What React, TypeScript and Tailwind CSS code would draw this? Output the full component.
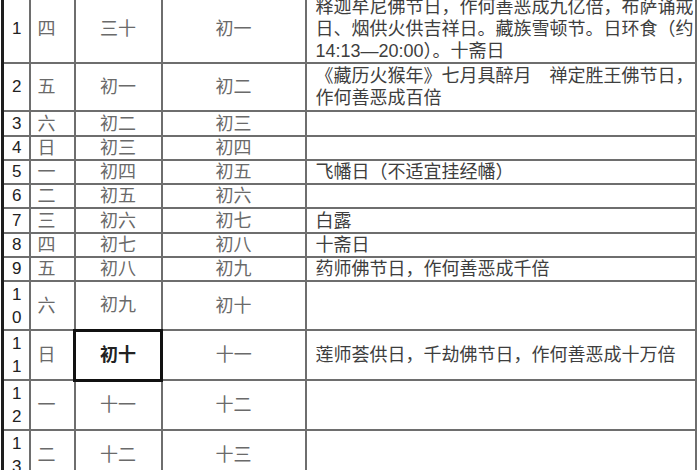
const rows: {
  n: string[];
  wd: string;
  a: string;
  b: string;
  note: string[];
  h: string;
  bold?: boolean;
}[] = [
  {
    n: ["1"],
    wd: "四",
    a: "三十",
    b: "初一",
    note: [
      "释迦牟尼佛节日，作何善恶成九亿倍，布萨诵戒",
      "日、烟供火供吉祥日。藏族雪顿节。日环食（约",
      "14:13—20:00）。十斋日",
    ],
    h: "h-[68px]",
  },
  {
    n: ["2"],
    wd: "五",
    a: "初一",
    b: "初二",
    note: ["《藏历火猴年》七月具醉月　禅定胜王佛节日，", "作何善恶成百倍"],
    h: "h-[48px]",
  },
  { n: ["3"], wd: "六", a: "初二", b: "初三", note: [], h: "h-[25px]" },
  { n: ["4"], wd: "日", a: "初三", b: "初四", note: [], h: "h-[24px]" },
  { n: ["5"], wd: "一", a: "初四", b: "初五", note: ["飞幡日（不适宜挂经幡）"], h: "h-[24px]" },
  { n: ["6"], wd: "二", a: "初五", b: "初六", note: [], h: "h-[24px]" },
  { n: ["7"], wd: "三", a: "初六", b: "初七", note: ["白露"], h: "h-[25px]" },
  { n: ["8"], wd: "四", a: "初七", b: "初八", note: ["十斋日"], h: "h-[24px]" },
  { n: ["9"], wd: "五", a: "初八", b: "初九", note: ["药师佛节日，作何善恶成千倍"], h: "h-[24px]" },
  { n: ["1", "0"], wd: "六", a: "初九", b: "初十", note: [], h: "h-[49px]" },
  {
    n: ["1", "1"],
    wd: "日",
    a: "初十",
    b: "十一",
    note: ["莲师荟供日，千劫佛节日，作何善恶成十万倍"],
    h: "h-[50px]",
    bold: true,
  },
  { n: ["1", "2"], wd: "一", a: "十一", b: "十二", note: [], h: "h-[50px]" },
  { n: ["1", "3"], wd: "二", a: "十二", b: "十三", note: [], h: "h-[50px]" },
];

const cell = "border-2 border-[#6e6e6e] p-0 align-middle";
// fixed line boxes so the CJK fallback font can't grow the rows
const line = "h-[20px] leading-[20px]";

export default function App() {
  return (
    <div className="h-[470px] w-[700px] overflow-hidden bg-white font-['Liberation_Sans','Noto_Sans_CJK_SC',sans-serif]">
      <table className="-mt-[6px] ml-px w-[696px] table-fixed border-collapse border-l-[3px] border-l-[#1e1e1e] text-[18px]">
        <colgroup>
          <col className="w-[27px]" />
          <col className="w-[45px]" />
          <col className="w-[87px]" />
          <col className="w-[144px]" />
          <col />
        </colgroup>
        <tbody>
          {rows.map((r, i) => (
            <tr key={i} className={r.h}>
              <td className={`${cell} border-l-[3px] border-l-[#1e1e1e] pl-[8px] text-[17px] text-[#222]`}>
                {r.n.map((d, j) => (
                  <div key={j} className={r.n.length > 1 ? "h-[23px] leading-[23px]" : line}>
                    {d}
                  </div>
                ))}
              </td>
              <td className={`${cell} pl-[7px] text-[#6a6a6a]`}>
                <div className={line}>{r.wd}</div>
              </td>
              <td
                className={
                  r.bold
                    ? "border-[3px] border-[#111] p-0 text-center align-middle font-bold text-[#222]"
                    : `${cell} text-center text-[#6a6a6a]`
                }
              >
                <div className={line}>{r.a}</div>
              </td>
              <td className={`${cell} text-center text-[#6a6a6a]`}>
                <div className={line}>{r.b}</div>
              </td>
              <td className={`${cell} pl-[9px] whitespace-nowrap text-[#3e3e3e]`}>
                {r.note.map((t, j) => (
                  <div key={j} className={r.note.length > 1 ? "h-[22px] leading-[22px]" : line}>
                    {t}
                  </div>
                ))}
              </td>
            </tr>
          ))}
        </tbody>
      </table>
    </div>
  );
}
